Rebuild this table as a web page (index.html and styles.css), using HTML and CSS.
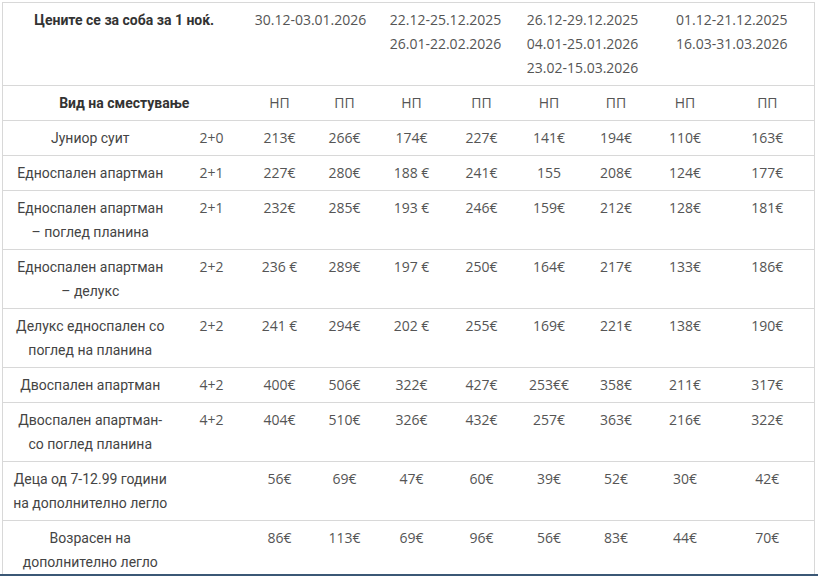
FILE: index.html
```html
<!DOCTYPE html>
<html lang="mk">
<head>
<meta charset="utf-8">
<title>Цени</title>
<link rel="stylesheet" href="styles.css">
</head>
<body>
<table class="prices">
  <colgroup>
    <col class="c-label"><col class="c-cap">
    <col class="c1"><col class="c2"><col class="c3"><col class="c4">
    <col class="c5"><col class="c6"><col class="c7"><col class="c8">
  </colgroup>
  <tr class="head">
    <th class="label" colspan="2">Цените се за соба за 1 ноќ.</th>
    <td colspan="2">30.12-03.01.2026</td>
    <td colspan="2">22.12-25.12.2025<br>26.01-22.02.2026</td>
    <td colspan="2">26.12-29.12.2025<br>04.01-25.01.2026<br>23.02-15.03.2026</td>
    <td colspan="2">01.12-21.12.2025<br>16.03-31.03.2026</td>
  </tr>
  <tr class="head">
    <th class="label" colspan="2">Вид на сместување</th>
    <td>НП</td><td>ПП</td><td>НП</td><td>ПП</td><td>НП</td><td>ПП</td><td>НП</td><td>ПП</td>
  </tr>
  <tr>
    <td class="label">Јуниор суит</td><td class="cap">2+0</td>
    <td>213€</td><td>266€</td><td>174€</td><td>227€</td><td>141€</td><td>194€</td><td>110€</td><td>163€</td>
  </tr>
  <tr>
    <td class="label">Едноспален апартман</td><td class="cap">2+1</td>
    <td>227€</td><td>280€</td><td>188 €</td><td>241€</td><td>155</td><td>208€</td><td>124€</td><td>177€</td>
  </tr>
  <tr>
    <td class="label">Едноспален апартман<br>– поглед планина</td><td class="cap">2+1</td>
    <td>232€</td><td>285€</td><td>193 €</td><td>246€</td><td>159€</td><td>212€</td><td>128€</td><td>181€</td>
  </tr>
  <tr>
    <td class="label">Едноспален апартман<br>– делукс</td><td class="cap">2+2</td>
    <td>236 €</td><td>289€</td><td>197 €</td><td>250€</td><td>164€</td><td>217€</td><td>133€</td><td>186€</td>
  </tr>
  <tr>
    <td class="label">Делукс едноспален со<br>поглед на планина</td><td class="cap">2+2</td>
    <td>241 €</td><td>294€</td><td>202 €</td><td>255€</td><td>169€</td><td>221€</td><td>138€</td><td>190€</td>
  </tr>
  <tr>
    <td class="label">Двоспален апартман</td><td class="cap">4+2</td>
    <td>400€</td><td>506€</td><td>322€</td><td>427€</td><td>253€€</td><td>358€</td><td>211€</td><td>317€</td>
  </tr>
  <tr>
    <td class="label">Двоспален апартман-<br>со поглед планина</td><td class="cap">4+2</td>
    <td>404€</td><td>510€</td><td>326€</td><td>432€</td><td>257€</td><td>363€</td><td>216€</td><td>322€</td>
  </tr>
  <tr>
    <td class="label">Деца од 7-12.99 години<br>на дополнително легло</td><td class="cap"></td>
    <td>56€</td><td>69€</td><td>47€</td><td>60€</td><td>39€</td><td>52€</td><td>30€</td><td>42€</td>
  </tr>
  <tr>
    <td class="label">Возрасен на<br>дополнително легло</td><td class="cap"></td>
    <td>86€</td><td>113€</td><td>69€</td><td>96€</td><td>56€</td><td>83€</td><td>44€</td><td>70€</td>
  </tr>
</table>
<div class="bottom-bar"></div>
</body>
</html>
```
FILE: styles.css
```css
html, body {
  margin: 0;
  padding: 0;
  background: #fff;
}
body {
  padding: 2px 0 0 2px;
  font-family: "Open Sans", "Liberation Sans", sans-serif;
  font-size: 14px;
  color: #555;
}
.prices {
  border-collapse: collapse;
  table-layout: fixed;
  width: 812px;
  border: 1px solid #d8d8d8;
}
.prices tr {
  border-bottom: 1px solid #d8d8d8;
}
.prices td, .prices th {
  padding: 5px 4px;
  line-height: 24px;
  text-align: center;
  vertical-align: top;
  font-weight: 400;
  white-space: nowrap;
}
.c-label { width: 175px; }
.c-cap { width: 68px; }
.c1 { width: 68px; }
.c2 { width: 62px; }
.c3 { width: 72px; }
.c4 { width: 68px; }
.c5 { width: 67px; }
.c6 { width: 67px; }
.c7 { width: 71px; }
.c8 { width: 94px; }
.prices .label {
  font-family: Roboto, "Liberation Sans", sans-serif;
  color: #444;
}
.prices th.label {
  font-weight: 700;
  color: #333;
}
.prices .cap {
  color: #555;
}
.bottom-bar {
  position: fixed;
  left: 0;
  right: 0;
  bottom: 0;
  height: 2px;
  background: #3b5876;
}
```
